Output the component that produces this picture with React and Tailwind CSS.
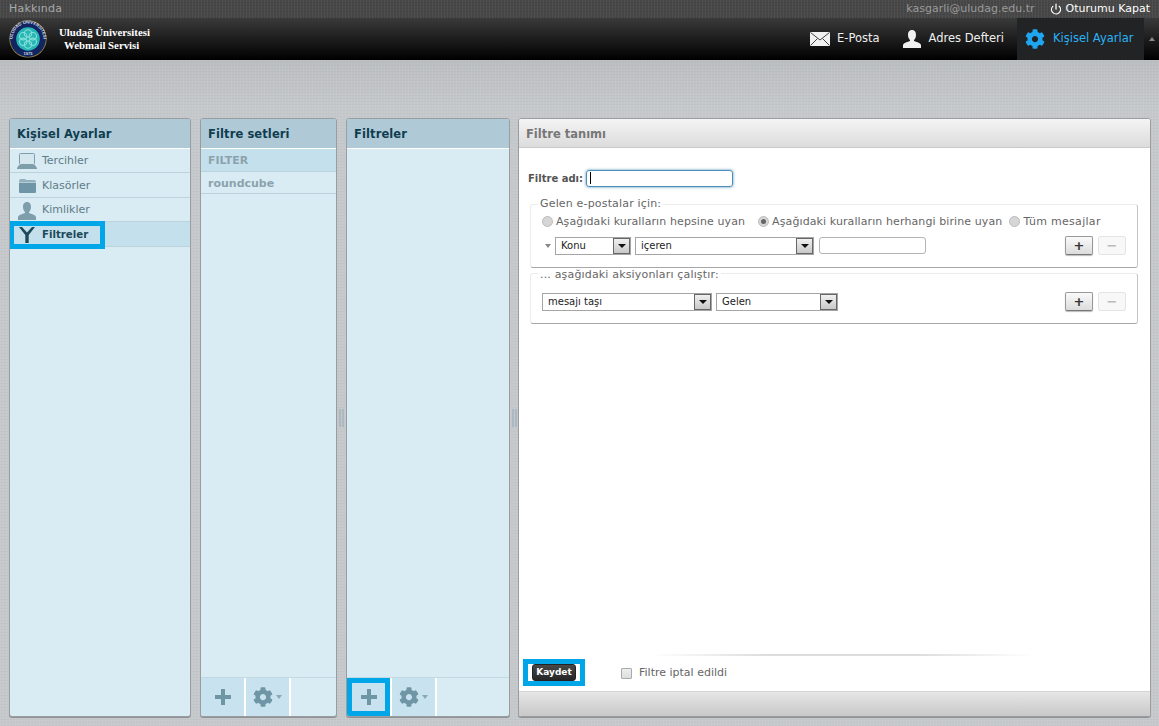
import { Power } from "lucide-react";
import { FaCog } from "react-icons/fa";

function Logo() {
  return (
    <svg width="38" height="38" viewBox="0 0 38 38" className="shrink-0">
      <defs>
        <path id="logoTop" d="M5 25.7 A15.5 15.5 0 1 1 33 25.7" />
      </defs>
      <circle cx="19" cy="19" r="18.6" fill="#a8934a" />
      <circle cx="19" cy="19" r="17.9" fill="#122560" />
      <circle cx="19" cy="19" r="11.8" fill="#27b5b5" />
      <g fill="none" stroke="#86e0da" strokeWidth="1.1">
        <circle cx="19" cy="13.4" r="3.7" />
        <circle cx="19" cy="24.6" r="3.7" />
        <circle cx="14.2" cy="16.2" r="3.7" />
        <circle cx="23.8" cy="16.2" r="3.7" />
        <circle cx="14.2" cy="21.8" r="3.7" />
        <circle cx="23.8" cy="21.8" r="3.7" />
      </g>
      <text fontSize="4.2" fontWeight="bold" fill="#d7deea" fontFamily="'Liberation Sans',sans-serif">
        <textPath href="#logoTop" startOffset="50%" textAnchor="middle">ULUDAĞ ÜNİVERSİTESİ</textPath>
      </text>
      <text fontSize="4" fontWeight="bold" fill="#d7deea" fontFamily="'Liberation Sans',sans-serif" x="19" y="35.4" textAnchor="middle">1975</text>
    </svg>
  );
}

function MailIcon() {
  return (
    <svg width="20" height="14" viewBox="0 0 20 14">
      <rect x="0" y="0" width="20" height="14" fill="#f2f2f2" />
      <path d="M0.5 0.5 L10 8 L19.5 0.5 M0.5 13.5 L7.5 6.5 M19.5 13.5 L12.5 6.5" fill="none" stroke="#444" strokeWidth="1" />
    </svg>
  );
}

function PersonIcon({ color }) {
  return (
    <svg width="18" height="18" viewBox="0 0 18 18">
      <path d="M9 0 C12 0 13 2.4 13 5 C13 7.4 12 9 11 10 L11 11 C13 12 17.5 12.6 18 15 L18 18 L0 18 L0 15 C0.5 12.6 5 12 7 11 L7 10 C6 9 5 7.4 5 5 C5 2.4 6 0 9 0 Z" fill={color} />
    </svg>
  );
}

function LaptopIcon() {
  return (
    <svg width="20" height="17" viewBox="0 0 20 17">
      <rect x="2.5" y="0.5" width="15" height="11" rx="1" fill="#d5e6ee" stroke="#7f9eac" />
      <path d="M2 12 H18 L20 15 V16 H0 V15 Z" fill="#7f9eac" />
    </svg>
  );
}

function FolderIcon() {
  return (
    <svg width="17" height="14" viewBox="0 0 17 14">
      <path d="M0 2 Q0 0 2 0 H6 L7 1 H15 Q17 1 17 3 V3.5 H0 Z" fill="#94b0bd" />
      <path d="M0 4 H17 V13 Q17 14 16 14 H1 Q0 14 0 13 Z" fill="#6f96a7" />
    </svg>
  );
}

function FilterIcon() {
  return (
    <svg width="16" height="16" viewBox="0 0 16 16">
      <path d="M0 0 H3 L8 5.5 L13 0 H16 L9.7 8 V16 H6.3 V8 Z" fill="#1d4a5a" />
    </svg>
  );
}

function PlusIcon() {
  return (
    <svg width="16" height="16" viewBox="0 0 16 16">
      <path d="M6 0 H10 V6 H16 V10 H10 V16 H6 V10 H0 V6 H6 Z" fill="#6f96a5" />
    </svg>
  );
}

function SideRow({ icon, label, active, height }) {
  return (
    <div className={`flex items-center pt-[2px] ${height} border-b border-[#bcd3dc] ${active ? "bg-[#c5e0ed] font-bold text-[#1d4a5a] text-[10.2px]" : "text-[#5f7c89]"}`}>
      <div className="w-[32px] flex justify-center pl-[2px]">{icon}</div>
      <span>{label}</span>
    </div>
  );
}

function PanelHead({ title }) {
  return (
    <div className="h-[27px] pt-[2px] flex items-center pl-[7px] bg-[#afcad6] border-b border-white text-[11.5px] font-bold text-[#0f3d50] tracking-[0.1px] shrink-0 box-content">
      {title}
    </div>
  );
}

function Panel({ className, children }) {
  return (
    <div className={`flex flex-col bg-[#d9ebf3] rounded-[3px] border border-[#9a9d9f] shadow-[0_1px_0_#8f9294] overflow-hidden ${className}`}>
      {children}
    </div>
  );
}

function PanelFooter({ highlight }) {
  return (
    <div className="mt-auto h-[39px] border-t border-[#c3d9e2] flex shrink-0">
      <div className="relative w-[43px] bg-[#c9e2ef] flex items-center justify-center border-r-2 border-white box-content">
        <PlusIcon />
        {highlight && <div className="absolute inset-0 border-[5px] border-[#00a6e8]" />}
      </div>
      <div className="w-[43px] bg-[#c9e2ef] flex items-center justify-center gap-[3px] border-r-2 border-white box-content">
        <FaCog className="text-[#6f96a5] text-[20px]" />
        <span className="w-0 h-0 border-x-[3.5px] border-x-transparent border-t-[4px] border-t-[#86a9b7]" />
      </div>
    </div>
  );
}

function Splitter({ className }) {
  return (
    <div className={`h-full flex items-center justify-center ${className}`}>
      <div className="w-[5px] h-[18px] flex justify-between">
        <span className="w-[2px] bg-[#aab9c2]" />
        <span className="w-[2px] bg-[#aab9c2]" />
      </div>
    </div>
  );
}

function Select({ label, className }) {
  return (
    <div className={`h-[18px] border border-[#a5a5a5] flex items-center bg-white ${className}`}>
      <span className="flex-1 pl-[5px] text-[10px] text-[#222]">{label}</span>
      <span className="w-[17px] h-[16px] bg-[linear-gradient(#f0f0f0,#c8c8c8)] border-[1.5px] border-[#666] flex items-center justify-center">
        <span className="w-0 h-0 border-x-[4px] border-x-transparent border-t-[4px] border-t-[#111]" />
      </span>
    </div>
  );
}

function SmallButton({ sign, disabled }) {
  return (
    <span className={`w-[28px] h-[19px] flex items-center justify-center rounded-[2px] text-[13px] font-bold leading-none ${disabled ? "border border-[#e4e4e4] bg-[#f8f8f8] text-[#bbb]" : "border border-[#999] border-b-[#777] bg-[linear-gradient(#fafafa,#dcdcdc)] text-[#333] shadow-[0_1px_1px_#bbb]"}`}>
      {sign}
    </span>
  );
}

function Radio({ checked, label, className }) {
  return (
    <span className={`flex items-center gap-[3px] ${className}`}>
      <span className="w-[11px] h-[11px] mb-[2px] rounded-full bg-[#d6d6d6] border border-[#bbb] flex items-center justify-center">
        {checked && <span className="w-[5px] h-[5px] rounded-full bg-[#666]" />}
      </span>
      <span>{label}</span>
    </span>
  );
}

function Group({ legend, legendClass, className, children }) {
  return (
    <fieldset className={`border border-[#ececec] border-b-[#a8a8a8] border-r-[#c4c4c4] rounded-[3px] ${className}`}>
      <legend className={`ml-[7px] px-[2px] h-[14px] leading-[14px] text-[#666] tracking-[0.17px] ${legendClass}`}>{legend}</legend>
      {children}
    </fieldset>
  );
}

export default function App() {
  return (
    <div className="w-full h-[726px] overflow-hidden flex flex-col font-['DejaVu_Sans',sans-serif] text-[11px] bg-[#c5c8cb]">
      <div className="h-[18px] bg-[#474747] bg-[repeating-linear-gradient(90deg,rgba(255,255,255,0.05)_0_1px,transparent_1px_3px),repeating-linear-gradient(0deg,rgba(0,0,0,0.05)_0_1px,transparent_1px_3px)] flex items-center pl-[9px] pr-[9px] shrink-0">
        <span className="text-[#a9a9a9] tracking-[0.2px]">Hakkında</span>
        <span className="ml-auto text-[#9a9a9a]">kasgarli@uludag.edu.tr</span>
        <Power size={12} strokeWidth={2.5} className="ml-[15px] mr-[4px] text-white" />
        <span className="text-white">Oturumu Kapat</span>
      </div>

      <div className="h-[42px] bg-[linear-gradient(#3a3a3a,#000)] flex items-stretch shrink-0 pl-[9px]">
        <div className="flex items-center">
          <Logo />
        </div>
        <div className="ml-[12px] pt-[8px] text-white font-['Liberation_Serif',serif] font-bold text-[10.8px] leading-[13px]">
          <div>Uludağ Üniversitesi</div>
          <div className="pl-[5px]">Webmail Servisi</div>
        </div>
        <div className="ml-auto flex items-stretch text-[#eee] text-[11.5px]">
          <div className="flex items-center gap-[7px] mr-[23px]">
            <MailIcon />
            <span>E-Posta</span>
          </div>
          <div className="flex items-center gap-[8px] mr-[13px]">
            <PersonIcon color="#f0f0f0" />
            <span>Adres Defteri</span>
          </div>
          <div className="w-[127px] bg-[#222324] flex items-center pl-[8px] gap-[8px] text-[#2ab2f5]">
            <FaCog className="text-[#1ea7f0] text-[20px]" />
            <span>Kişisel Ayarlar</span>
          </div>
          <div className="w-[15px] flex items-center justify-center">
            <span className="w-0 h-0 border-x-[3.5px] border-x-transparent border-b-[4px] border-b-[#888]" />
          </div>
        </div>
      </div>

      <div className="flex-1 min-h-0 flex pt-[58px] pb-[9px] pl-[9px] pr-[8px] bg-[repeating-linear-gradient(90deg,rgba(255,255,255,0.06)_0_1px,transparent_1px_3px),repeating-linear-gradient(0deg,rgba(0,0,0,0.025)_0_1px,transparent_1px_3px),linear-gradient(#bbbec1,#c6c9cc_50px)]">
        <Panel className="w-[182px]">
          <PanelHead title="Kişisel Ayarlar" />
          <SideRow icon={<LaptopIcon />} label="Tercihler" height="h-[24px]" />
          <SideRow icon={<FolderIcon />} label="Klasörler" height="h-[25px]" />
          <SideRow icon={<PersonIcon color="#7f9eac" />} label="Kimlikler" height="h-[24px]" />
          <div className="relative">
            <SideRow icon={<FilterIcon />} label="Filtreler" active height="h-[25px]" />
            <div className="absolute -left-[1px] -top-[1px] w-[96px] h-[28px] border-[5px] border-[#00a6e8]" />
          </div>
        </Panel>

        <div className="w-[9px]" />

        <Panel className="w-[137px]">
          <PanelHead title="Filtre setleri" />
          <div className="h-[23px] pt-[2px] flex items-center pl-[7px] bg-[#c5e0ed] font-bold text-[#8ba3ad] border-b border-[#bcd3dc]">FILTER</div>
          <div className="h-[22px] pt-[3px] flex items-center pl-[7px] font-bold text-[#8ba3ad] border-b border-[#bcd3dc]">roundcube</div>
          <PanelFooter />
        </Panel>

        <Splitter className="w-[9px]" />

        <Panel className="w-[164px]">
          <PanelHead title="Filtreler" />
          <PanelFooter highlight />
        </Panel>

        <Splitter className="w-[8px]" />

        <div className="flex-1 flex flex-col bg-white rounded-[3px] border border-[#9a9d9f] shadow-[0_1px_0_#8f9294] overflow-hidden text-[#666]">
          <div className="h-[29px] pt-[3px] shrink-0 flex items-center pl-[7px] bg-[linear-gradient(#f4f4f4,#dcdcdc)] border-b border-[#c9c9c9] font-bold text-[#777] text-[11.5px]">
            Filtre tanımı
          </div>

          <div className="flex-1 flex flex-col pl-[11px] pr-[12px] min-h-0">
            <div className="flex items-center h-[18px] mt-[21px] -ml-[2px]">
              <span className="font-bold text-[#555] text-[10px] w-[58px] shrink-0">Filtre adı:</span>
              <div className="w-[147px] h-[17px] rounded-[3px] border border-[#4b8fb8] shadow-[0_0_3px_#4b8fb8] pl-[3px] flex items-center">
                <span className="w-[1px] h-[12px] bg-black" />
              </div>
            </div>

            <Group legend="Gelen e-postalar için:" className="mt-[10px] h-[71px]">
              <div className="flex items-center h-[18px] mt-[2px] pl-[11px] tracking-[0.1px]">
                <Radio label="Aşağıdaki kuralların hepsine uyan" />
                <Radio checked label="Aşağıdaki kuralların herhangi birine uyan" className="ml-[13px]" />
                <Radio label="Tüm mesajlar" className="ml-[7px] tracking-[0.3px]" />
              </div>
              <div className="flex items-center mt-[5px] pl-[14px]">
                <span className="w-0 h-0 border-x-[3px] border-x-transparent border-t-[4px] border-t-[#888] mr-[4px]" />
                <Select label="Konu" className="w-[76px]" />
                <Select label="içeren" className="w-[179px] ml-[4px]" />
                <span className="w-[107px] h-[17px] ml-[5px] border border-[#b5b5b5] rounded-[3px]" />
                <span className="ml-[139px]"><SmallButton sign="+" /></span>
                <span className="ml-[5px]"><SmallButton sign="−" disabled /></span>
              </div>
            </Group>

            <Group legend="... aşağıdaki aksiyonları çalıştır:" legendClass="relative top-[2px]" className="mt-[-2px] h-[58px]">
              <div className="flex items-center mt-[12px] pl-[11px]">
                <Select label="mesajı taşı" className="w-[170px]" />
                <Select label="Gelen" className="w-[122px] ml-[4px]" />
                <span className="ml-[227px]"><SmallButton sign="+" /></span>
                <span className="ml-[5px]"><SmallButton sign="−" disabled /></span>
              </div>
            </Group>

            <div className="mt-auto h-[2px] ml-[120px] mr-[104px] bg-[linear-gradient(90deg,#fff,#ddd_30%,#ddd_70%,#fff)]" />
            <div className="h-[35px] flex items-center ml-[2px] shrink-0">
              <div className="relative -mt-[3px]">
                <span className="block w-[44px] h-[17px] leading-[15px] text-center rounded-[3px] bg-[linear-gradient(#484848,#262626)] text-white font-bold text-[9px] border border-[#222]">Kaydet</span>
                <div className="absolute -left-[9px] -top-[5px] w-[62px] h-[27px] border-[5px] border-[#00a6e8]" />
              </div>
              <span className="ml-[45px] w-[11px] h-[11px] border border-[#aaa] rounded-[1px] bg-[linear-gradient(#eee,#ddd)]" />
              <span className="ml-[7px]">Filtre iptal edildi</span>
            </div>
          </div>

          <div className="h-[25px] shrink-0 bg-[linear-gradient(#e6e6e6,#c8c8c8)] border-t border-[#d4d4d4]" />
        </div>
      </div>
    </div>
  );
}
